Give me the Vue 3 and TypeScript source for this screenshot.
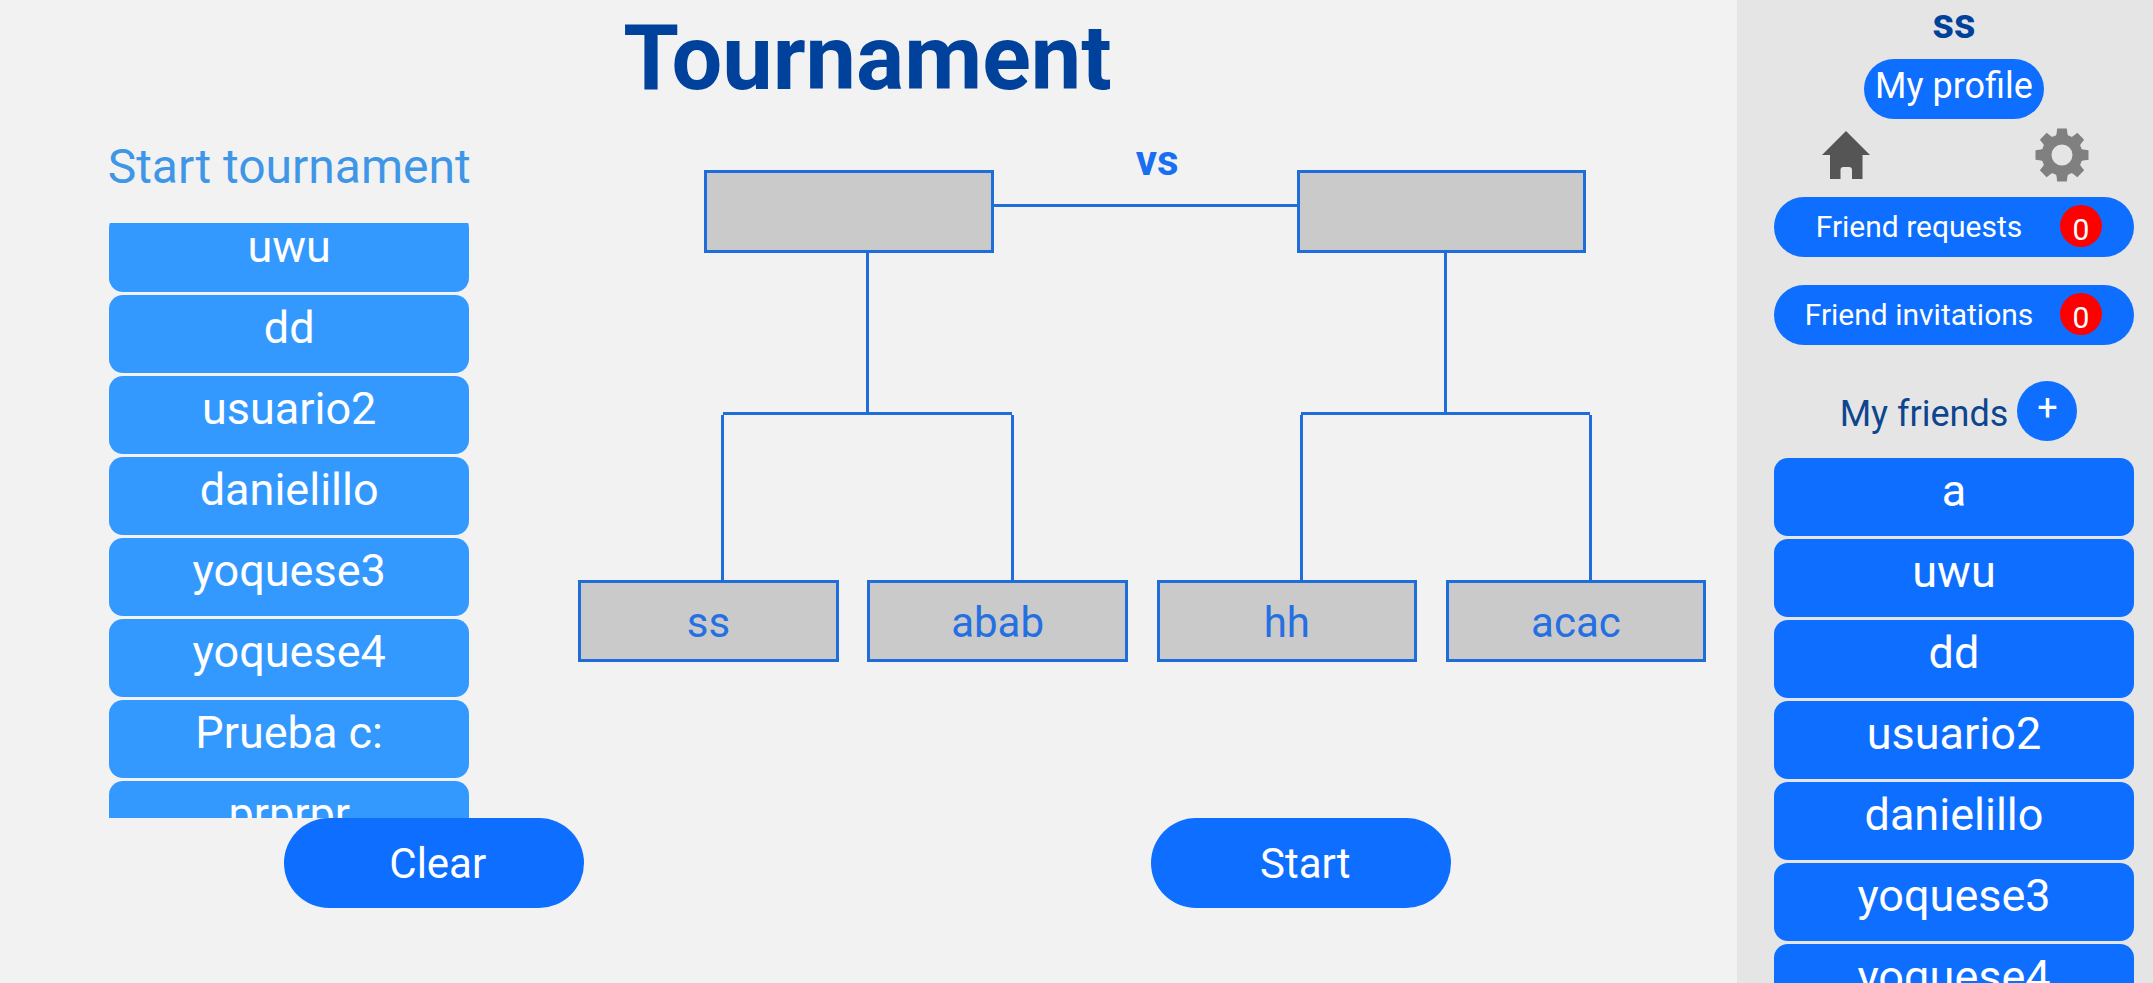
<script setup lang="ts">
import { onMounted, ref } from 'vue'

interface Match {
  winner: string
  players: [string, string]
}

const candidates: string[] = [
  'uwu', 'dd', 'usuario2', 'danielillo', 'yoquese3', 'yoquese4', 'Prueba c:', 'prprpr',
]
const friends: string[] = ['a', 'uwu', 'dd', 'usuario2', 'danielillo', 'yoquese3', 'yoquese4']
const matches: Match[] = [
  { winner: '', players: ['ss', 'abab'] },
  { winner: '', players: ['hh', 'acac'] },
]
const notices = [
  { label: 'Friend requests', count: 0 },
  { label: 'Friend invitations', count: 0 },
]

const candidateList = ref<HTMLElement | null>(null)

onMounted(() => {
  if (candidateList.value) candidateList.value.scrollTop = 9
})
</script>

<template>
  <div class="page">
    <main class="main">
      <h1 class="title">Tournament</h1>

      <div class="board">
        <section class="picker">
          <h2 class="picker-title">Start tournament</h2>
          <div ref="candidateList" class="candidates">
            <button v-for="name in candidates" :key="name" type="button" class="user light">
              {{ name }}
            </button>
          </div>
        </section>

        <section class="bracket">
          <div class="final">
            <div class="slot finalist-a">{{ matches[0].winner }}</div>
            <div class="versus"><span class="vs">vs</span></div>
            <div class="slot finalist-b">{{ matches[1].winner }}</div>
          </div>
          <div class="semis">
            <div v-for="match in matches" :key="match.players[0]" class="semi">
              <div class="stem"></div>
              <div class="fork"></div>
              <div class="legs"></div>
              <div class="players">
                <div v-for="player in match.players" :key="player" class="slot">{{ player }}</div>
              </div>
            </div>
          </div>
        </section>
      </div>

      <div class="actions">
        <button type="button" class="action">Clear</button>
        <button type="button" class="action">Start</button>
      </div>
    </main>

    <aside class="sidebar">
      <h2 class="username">ss</h2>
      <button type="button" class="profile">My profile</button>

      <nav class="icons">
        <button type="button" class="icon" aria-label="Home">
          <svg width="48" height="48" viewBox="0 0 48 48">
            <path
              fill="#555"
              d="M24 0 48 24H40.500V48H30V39Q30 36 27 36H21.500Q18.500 36 18.500 39V48H8V24H0Z"
            />
          </svg>
        </button>
        <button type="button" class="icon" aria-label="Settings">
          <svg width="54" height="54" viewBox="-27 -27 54 54">
            <g fill="#808080">
              <path
                v-for="turn in 8"
                :key="turn"
                d="M-7 -17 -5.500 -21 -4.800 -26.500H4.800L5.500 -21 7 -17Z"
                :transform="`rotate(${turn * 45})`"
              />
            </g>
            <circle r="15.500" fill="none" stroke="#808080" stroke-width="10" />
          </svg>
        </button>
      </nav>

      <div class="notices">
        <button v-for="notice in notices" :key="notice.label" type="button" class="notice">
          <span class="notice-label">{{ notice.label }}</span>
          <span class="badge">{{ notice.count }}</span>
        </button>
      </div>

      <div class="friends-head">
        <h3 class="friends-title">My friends</h3>
        <button type="button" class="add">+</button>
      </div>

      <div class="friends">
        <button v-for="name in friends" :key="name" type="button" class="user">{{ name }}</button>
      </div>
    </aside>
  </div>
</template>

<style>
body {
  margin: 0;
  background: #f2f2f2;
}
</style>

<style scoped>
.page {
  --blue: #0d6eff;
  --line: #1f6dd8;
  --navy: #00429b;
  display: flex;
  height: 100vh;
  overflow: hidden;
  background: #f2f2f2;
  font-family: Roboto, 'Liberation Sans', sans-serif;
}

.page * {
  box-sizing: border-box;
}

h1,
h2,
h3 {
  margin: 0;
}

button {
  padding: 0;
  border: 0;
  background: var(--blue);
  color: #fff;
  font-family: inherit;
  cursor: pointer;
}

.main {
  flex: 1;
  min-width: 0;
  display: flex;
  flex-direction: column;
  padding: 0 2px 75px 0;
}

.title {
  color: var(--navy);
  font-size: 90px;
  line-height: 118px;
  text-align: center;
}

.board {
  flex: 1;
  min-height: 0;
  display: grid;
  grid-template-columns: 1fr 2fr;
  grid-template-rows: minmax(0, 1fr);
}

.picker {
  display: flex;
  flex-direction: column;
  align-items: center;
  min-height: 0;
}

.picker-title {
  padding: 21px 0 28px;
  color: #4096e6;
  font-size: 48px;
  font-weight: 400;
  line-height: 56px;
}

.candidates {
  flex: 1;
  min-height: 0;
  width: 360px;
  overflow: hidden;
}

.user {
  display: block;
  width: 100%;
  height: 78px;
  margin-bottom: 3px;
  padding-bottom: 12px;
  border-radius: 14px;
  font-size: 45px;
  line-height: 66px;
}

.user.light {
  background: #3399ff;
}

.bracket {
  padding-top: 52px;
}

.slot {
  height: 82px;
  border: 3px solid var(--line);
  background: #cacaca;
  color: #2470e2;
  font-size: 42px;
  line-height: 80px;
  text-align: center;
}

.final {
  display: grid;
  grid-template-columns: 126fr 290fr 303fr 290fr 149fr;
}

.final .slot {
  height: 83px;
}

.finalist-a {
  grid-column: 2;
}

.versus {
  position: relative;
  height: 37px;
  border-bottom: 3px solid var(--line);
}

.vs {
  position: absolute;
  right: 0;
  bottom: 19px;
  left: 0;
  padding-left: 24px;
  color: #186ff2;
  font-size: 42px;
  font-weight: 700;
  line-height: 48px;
  text-align: center;
}

.semis {
  display: grid;
  grid-template-columns: 1fr 1fr;
}

.stem {
  width: 3px;
  height: 159px;
  margin: 0 auto;
  background: var(--line);
}

.fork {
  width: 50%;
  height: 3px;
  margin: 0 auto;
  background: var(--line);
}

.legs {
  width: calc(50% + 3px);
  height: 165px;
  margin: 0 auto;
  border: solid var(--line);
  border-width: 0 3px;
}

.players {
  display: grid;
  grid-template-columns: 1fr 1fr;
}

.players .slot {
  width: 90%;
}

.actions {
  display: flex;
  justify-content: space-around;
}

.action {
  width: 300px;
  height: 90px;
  padding-left: 8px;
  border-radius: 45px;
  font-size: 42px;
}

.sidebar {
  width: 416px;
  display: flex;
  flex-direction: column;
  align-items: center;
  padding: 0 19px 0 37px;
  overflow: hidden;
  background: #e5e5e5;
}

.sidebar > * {
  flex: none;
}

.username {
  padding-bottom: 11px;
  color: var(--navy);
  font-size: 42px;
  line-height: 48px;
}

.profile {
  width: 180px;
  height: 60px;
  padding-bottom: 6px;
  border-radius: 30px;
  font-size: 36px;
  line-height: 54px;
}

.icons {
  display: flex;
  justify-content: space-between;
  align-items: center;
  width: 100%;
  height: 78px;
  padding: 0 45px 6px;
}

.icon {
  width: 54px;
  height: 54px;
  display: grid;
  place-items: center;
  background: none;
}

.notices {
  width: 100%;
  display: flex;
  flex-direction: column;
  gap: 28px;
}

.notice {
  display: flex;
  align-items: center;
  height: 60px;
  padding: 0 32px 2px 4px;
  border-radius: 30px;
  font-size: 30px;
}

.notice-label {
  flex: 1;
}

.badge {
  width: 42px;
  height: 42px;
  padding-top: 4px;
  border-radius: 50%;
  background: #f00;
  line-height: 42px;
}

.friends-head {
  display: flex;
  gap: 9px;
  padding: 36px 0 17px 9px;
}

.friends-title {
  padding-top: 11px;
  color: #0f458f;
  font-size: 36px;
  font-weight: 400;
  line-height: 44px;
}

.add {
  width: 60px;
  height: 60px;
  padding-bottom: 6px;
  border-radius: 50%;
  font-size: 36px;
  line-height: 54px;
}

.friends {
  width: 100%;
}
</style>
